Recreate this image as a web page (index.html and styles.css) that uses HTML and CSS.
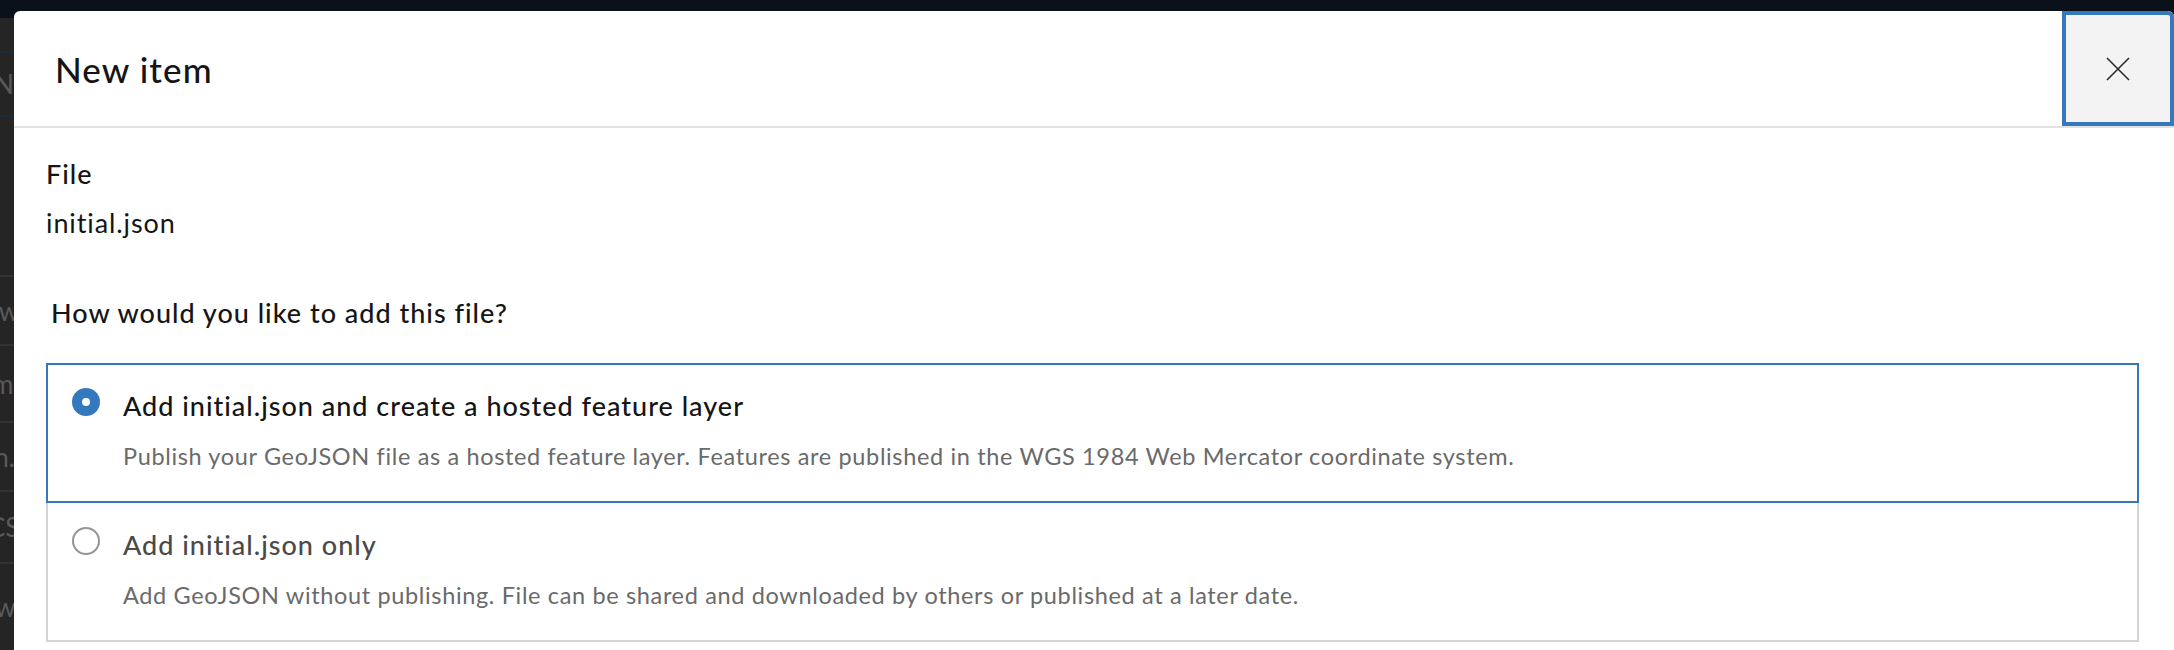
FILE: index.html
```html
<!DOCTYPE html>
<html lang="en">
<head>
<meta charset="utf-8">
<title>New item</title>
<link rel="stylesheet" href="styles.css">
</head>
<body>
<div class="page">
  <div class="page-top"></div>
  <div class="page-rows">
    <div class="row r1"><span>New</span></div>
    <div class="row r2"></div>
    <div class="row r3"><span>Owner</span></div>
    <div class="row r4"><span>Item</span></div>
    <div class="row r5"><span>json.s</span></div>
    <div class="row r6"><span>CSV-</span></div>
    <div class="row r7"><span>view-</span></div>
  </div>
</div>

<div class="modal" role="dialog" aria-labelledby="modal-title">
  <header class="modal-header">
    <h2 class="modal-title" id="modal-title">New item</h2>
    <button class="close-btn" aria-label="Close">
      <svg width="24" height="24" viewBox="0 0 24 24" aria-hidden="true">
        <path d="M1 1 L23 23 M23 1 L1 23" stroke="#2b2b2b" stroke-width="1.6" fill="none"/>
      </svg>
    </button>
  </header>
  <div class="modal-body">
    <div class="file-label">File</div>
    <div class="file-name">initial.json</div>
    <fieldset class="choice">
      <legend class="choice-legend">How would you like to add this file?</legend>
      <div class="options">
        <label class="option selected">
          <span class="radio checked"></span>
          <span class="option-text">
            <span class="option-title">Add initial.json and create a hosted feature layer</span>
            <span class="option-desc">Publish your GeoJSON file as a hosted feature layer. Features are published in the WGS 1984 Web Mercator coordinate system.</span>
          </span>
        </label>
        <label class="option">
          <span class="radio"></span>
          <span class="option-text">
            <span class="option-title muted">Add initial.json only</span>
            <span class="option-desc">Add GeoJSON without publishing. File can be shared and downloaded by others or published at a later date.</span>
          </span>
        </label>
      </div>
    </fieldset>
  </div>
</div>
</body>
</html>
```

FILE: styles.css
```css
* { box-sizing: border-box; }

html, body {
  margin: 0;
  padding: 0;
  width: 2174px;
  height: 650px;
  overflow: hidden;
}

body {
  background: #252525;
  font-family: Lato, "Noto Sans", sans-serif;
  font-variant-ligatures: none;
  position: relative;
}

/* dimmed page behind the modal */
.page-top {
  height: 18px;
  background: #0a111b;
}

.page-rows {
  display: flex;
  flex-direction: column;
}

.row {
  color: #5a5a5a;
  font-size: 26px;
  white-space: nowrap;
  overflow: hidden;
  display: flex;
  align-items: center;
  border-bottom: 2px solid #333333;
}

.row span { margin-left: -22px; }

.r1 { height: 66px; border-top: 2px solid #1b2a3a; border-bottom-color: #1b2a3a; margin-top: 33px; }
.r1 span { margin-left: -6px; }
.r2 { height: 160px; }
.r3 { height: 69px; }
.r4 { height: 77px; }
.r4 span { margin-left: -38px; }
.r5 { height: 69px; }
.r5 span { margin-left: -38px; }
.r6 { height: 72px; }
.r6 span { margin-left: -12px; }
.r7 { height: 86px; border-bottom: none; }
.r7 span { margin-left: -38px; }

/* modal */
.modal {
  position: absolute;
  left: 14px;
  top: 11px;
  right: 0;
  bottom: -40px;
  background: #ffffff;
  border-radius: 6px 6px 0 0;
  color: #151515;
}

.modal-header {
  display: flex;
  align-items: stretch;
  height: 117px;
  border-bottom: 2px solid #e2e2e2;
}

.modal-title {
  flex: 1;
  margin: 0;
  padding-left: 41px;
  display: flex;
  align-items: center;
  font-size: 35px;
  font-weight: 500;
  letter-spacing: 1.1px;
  color: #151515;
}

.close-btn {
  width: 112px;
  height: 115px;
  border: 4px solid #3479be;
  border-radius: 0 6px 0 0;
  background: #f3f3f3;
  display: flex;
  align-items: center;
  justify-content: center;
  padding: 0;
  margin: 0;
}

.modal-body {
  padding: 28px 35px 0 32px;
}

.file-label {
  font-size: 27px;
  line-height: 36px;
  font-weight: 500;
  letter-spacing: 1px;
  color: #151515;
}

.file-name {
  margin-top: 13px;
  font-size: 27px;
  line-height: 36px;
  letter-spacing: 0.9px;
  color: #151515;
}

.choice {
  border: none;
  margin: 54px 0 0 0;
  padding: 0;
  min-width: 0;
}

.choice-legend {
  padding: 0 0 0 5px;
  font-size: 27px;
  line-height: 36px;
  font-weight: 500;
  letter-spacing: 1px;
  color: #151515;
}

.options {
  margin-top: 32px;
  display: flex;
  flex-direction: column;
}

.option {
  display: flex;
  align-items: flex-start;
  gap: 23px;
  border: 2px solid #d4d4d4;
  padding: 23px 24px 29px 24px;
  background: #ffffff;
}

.option + .option {
  margin-top: -2px;
  padding-top: 24px;
}

.option.selected {
  border-color: #3479be;
  position: relative;
  z-index: 1;
}

.radio {
  flex: none;
  width: 28px;
  height: 28px;
  border-radius: 50%;
  border: 2px solid #959595;
  background: #ffffff;
}

.radio.checked {
  border: 10px solid #3479be;
}

.option-text {
  display: flex;
  flex-direction: column;
  gap: 16px;
}

.option-title {
  font-size: 27px;
  line-height: 36px;
  font-weight: 500;
  letter-spacing: 1px;
  color: #151515;
}

.option-title.muted {
  color: #4a4a4a;
}

.option-desc {
  font-size: 23.5px;
  line-height: 32px;
  letter-spacing: 0.65px;
  color: #6a6a6a;
}
```
